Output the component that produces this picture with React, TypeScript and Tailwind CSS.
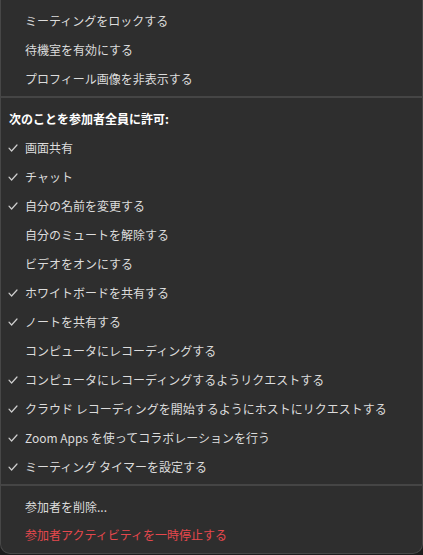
import React from 'react';

const topItems = ['ミーティングをロックする', '待機室を有効にする', 'プロフィール画像を非表示する'];

const allowItems: { label: string; checked: boolean }[] = [
  { label: '画面共有', checked: true },
  { label: 'チャット', checked: true },
  { label: '自分の名前を変更する', checked: true },
  { label: '自分のミュートを解除する', checked: false },
  { label: 'ビデオをオンにする', checked: false },
  { label: 'ホワイトボードを共有する', checked: true },
  { label: 'ノートを共有する', checked: true },
  { label: 'コンピュータにレコーディングする', checked: false },
  { label: 'コンピュータにレコーディングするようリクエストする', checked: true },
  { label: 'クラウド レコーディングを開始するようにホストにリクエストする', checked: true },
  { label: 'Zoom Apps を使ってコラボレーションを行う', checked: true },
  { label: 'ミーティング タイマーを設定する', checked: true },
];

const Check = () => (
  <svg width="10" height="8" viewBox="0 0 10 8" fill="none">
    <path d="M1 4.2 L3.6 7 L9 1" stroke="#cfcfcf" strokeWidth="1.2" strokeLinecap="round" strokeLinejoin="round" />
  </svg>
);

const Row = ({ label, checked, h = 'h-[29px]', color = 'text-[#dcdcdc]' }: { label: string; checked?: boolean; h?: string; color?: string }) => (
  <div className={`flex items-center ${h} pl-[7px] text-[12px] ${color}`}>
    <div className="w-[17px] flex items-center">{checked ? <Check /> : null}</div>
    <span className="whitespace-nowrap">{label}</span>
  </div>
);

export default function App() {
  return (
    <div className="w-[423px] h-[555px] bg-[#1c1c1c] overflow-hidden" style={{ fontFamily: '"Noto Sans CJK JP", "Noto Sans", sans-serif' }}>
      <div className="w-full h-[554px] bg-[#2e2e2e] rounded-b-[10px] border border-t-0 border-[#474747] flex flex-col pt-[6px]">
        {topItems.map(item => (
          <Row key={item} label={item} />
        ))}
        <div className="h-[2px] bg-[#454545] mt-[3px]" />
        <div className="flex items-center h-[29px] mt-[6px] pl-[8px] text-[12px] font-bold text-white">次のことを参加者全員に許可:</div>
        {allowItems.map(item => (
          <Row key={item.label} label={item.label} checked={item.checked} />
        ))}
        <div className="h-[2px] bg-[#454545] mt-[3px]" />
        <div className="mt-[7px]">
          <Row label="参加者を削除..." h="h-[28px]" />
          <Row label="参加者アクティビティを一時停止する" h="h-[27px]" color="text-[#e5484d]" />
        </div>
      </div>
    </div>
  );
}
